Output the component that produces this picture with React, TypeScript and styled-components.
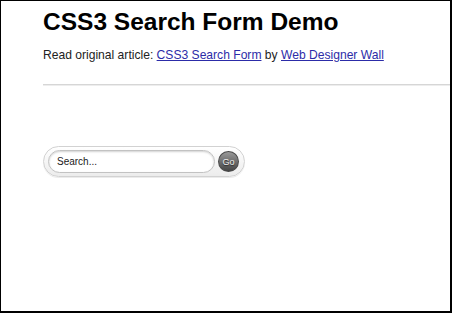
import React from "react";
import styled, { createGlobalStyle } from "styled-components";

const Global = createGlobalStyle`
  html, body { margin: 0; padding: 0; background: #fff; }
  body { font-family: "Liberation Sans", Arial, sans-serif; }
`;

const Frame = styled.div`
  box-sizing: border-box;
  width: 452px;
  height: 313px;
  border-style: solid;
  border-color: #000;
  border-width: 1px 2px 2px 1px;
  overflow: hidden;
  padding: 7px 0 0 42px;
`;

const Title = styled.h1`
  margin: 0;
  font-size: 24.5px;
  line-height: 28px;
  font-weight: bold;
  color: #000;
`;

const Intro = styled.p`
  margin: 11px 0 0;
  font-size: 12.1px;
  line-height: 16px;
  color: #222;
`;

const Link = styled.a`
  color: #2c2ca8;
  text-decoration: underline;
`;

const Rule = styled.hr`
  margin: 21px 0 0;
  border: 0;
  height: 2px;
  background: linear-gradient(#d6d6d6 50%, #ededed 50%);
`;

const Form = styled.form`
  margin-top: 60px;
  display: inline-flex;
  align-items: center;
  gap: 3px;
  box-sizing: border-box;
  width: 202px;
  height: 31px;
  padding: 0 5px 0 4px;
  border: 1px solid #d2d2d2;
  border-radius: 16px;
  background: linear-gradient(#ffffff, #ececec);
  box-shadow: 0 1px 0 rgba(0, 0, 0, 0.08);
`;

const Field = styled.input`
  box-sizing: border-box;
  width: 169px;
  height: 23px;
  padding: 0 0 0 8px;
  border: 1px solid #c2c2c2;
  border-radius: 12px;
  background: #fff;
  box-shadow: inset 0 1px 2px rgba(0, 0, 0, 0.18);
  font: 10px "Liberation Sans", Arial, sans-serif;
  color: #1a1a1a;
  outline: none;
  &::placeholder { color: #1a1a1a; }
`;

const Go = styled.button`
  box-sizing: border-box;
  width: 21px;
  height: 21px;
  padding: 0;
  border-radius: 50%;
  border: 1px solid #494949;
  background: linear-gradient(#9a9a9a, #454545);
  color: #eee;
  font: 9px "Liberation Sans", Arial, sans-serif;
  text-shadow: 0 1px 1px rgba(0, 0, 0, 0.6);
  cursor: pointer;
`;

export default function App() {
  return (
    <>
      <Global />
      <Frame>
        <Title>CSS3 Search Form Demo</Title>
        <Intro>
          Read original article: <Link href="#">CSS3 Search Form</Link> by{" "}
          <Link href="#">Web Designer Wall</Link>
        </Intro>
        <Rule />
        <Form onSubmit={(e) => e.preventDefault()}>
          <Field type="text" defaultValue="Search..." />
          <Go type="submit">Go</Go>
        </Form>
      </Frame>
    </>
  );
}
